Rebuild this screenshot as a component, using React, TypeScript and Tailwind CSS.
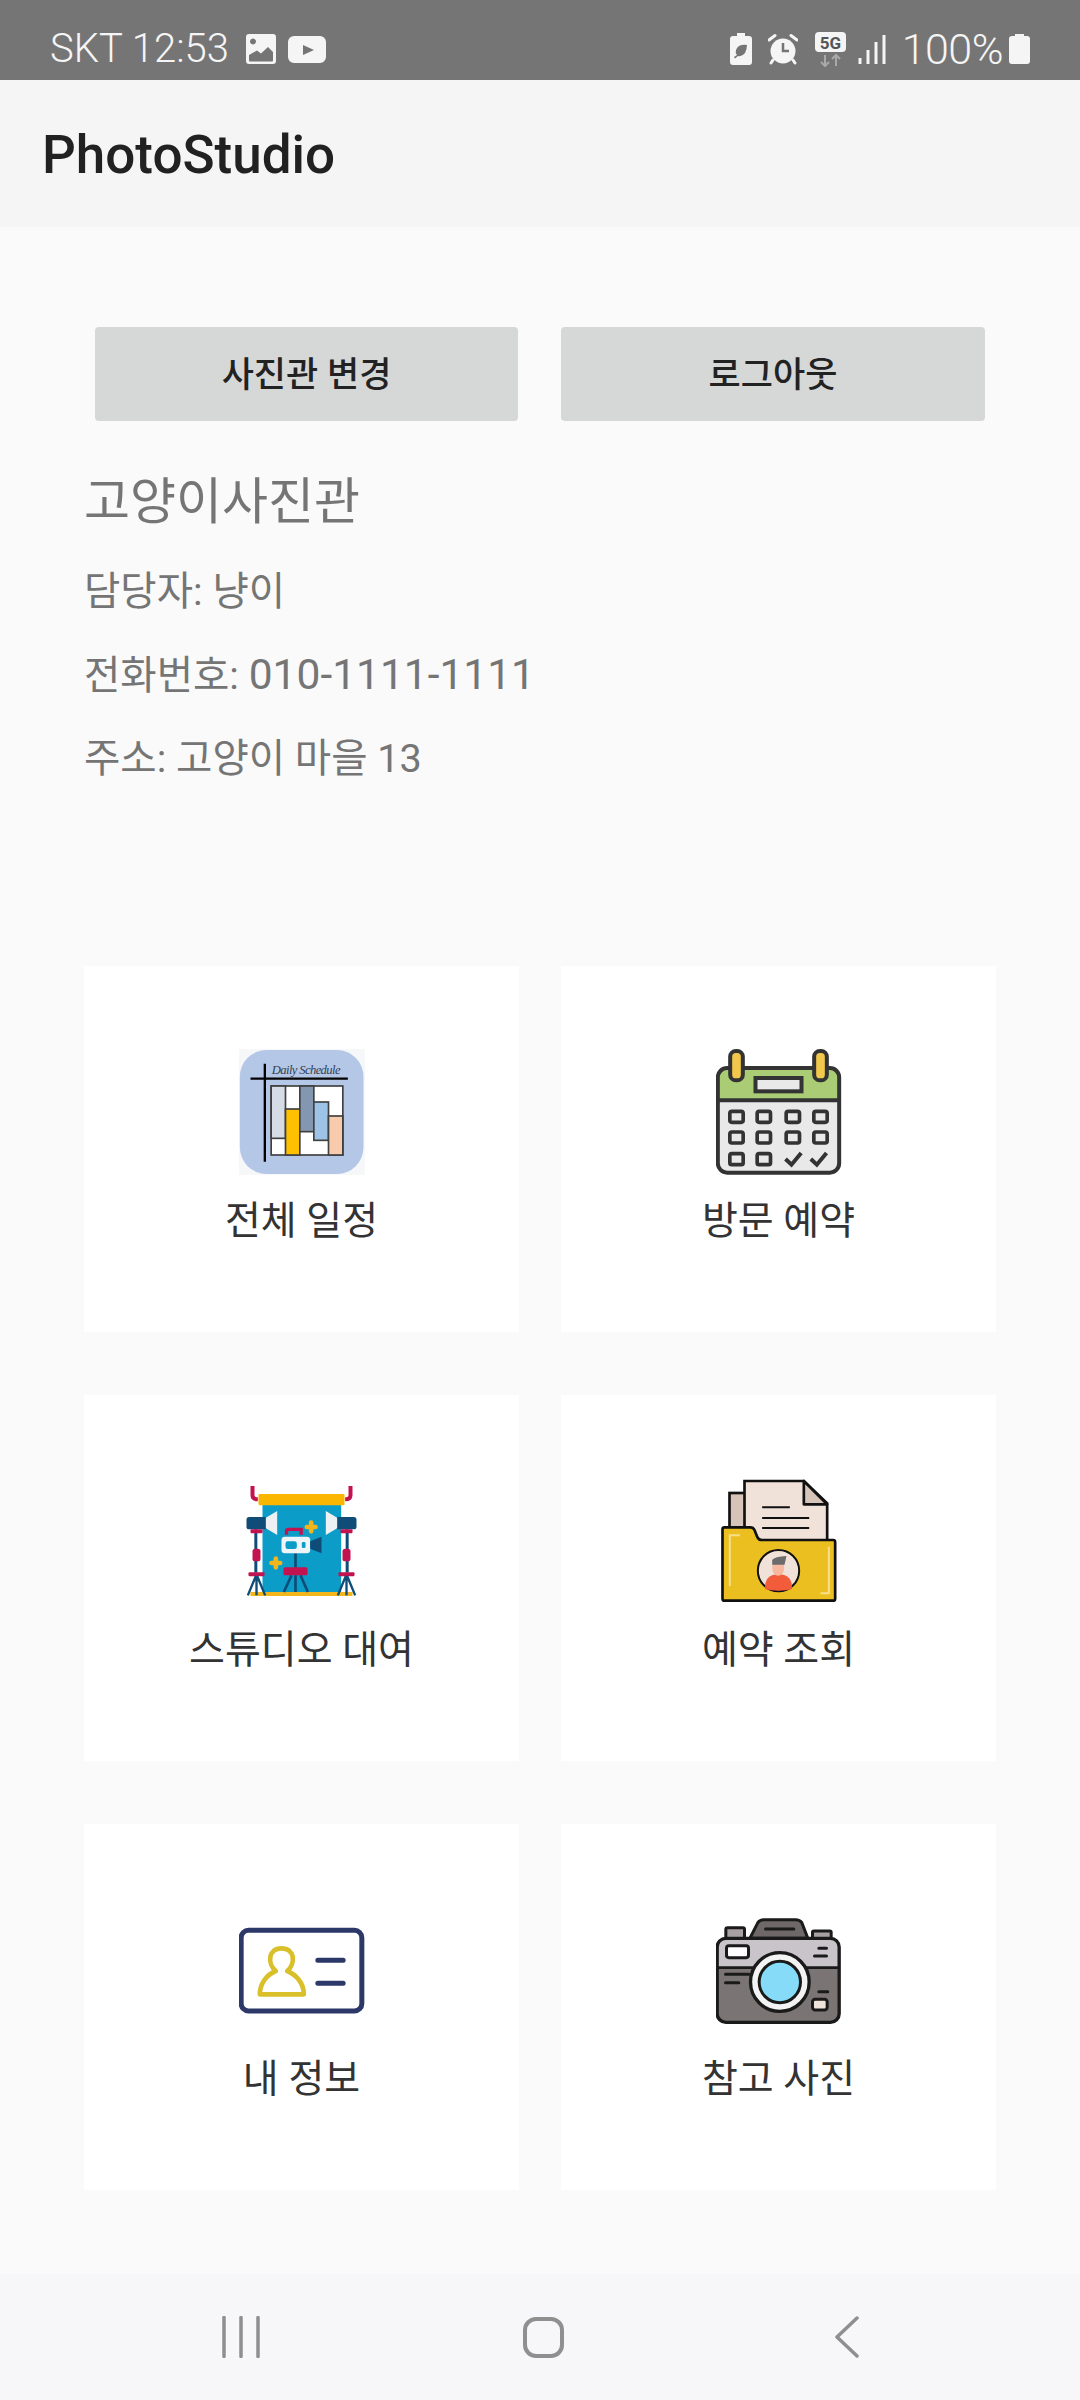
const Ink = "#333333";

function ScheduleIcon() {
  return (
    <svg viewBox="115.5 84 378 378" className="h-[126px] w-[126px]">
      <rect x="115.5" y="84" width="378" height="378" fill="#f6f7f9" />
      <rect x="118" y="87" width="371" height="372" rx="80" fill="#b4c7e7" />
      <text x="214" y="160" fontSize="38" fontStyle="italic" fontFamily="'Liberation Serif', serif" fill="#333f50" textLength="206">Daily Schedule</text>
      <rect x="212" y="195" width="215" height="207" fill="#ffffff" stroke="#404040" strokeWidth="5" />
      <rect x="212" y="195" width="43" height="157" fill="#d6dce5" stroke="#404040" strokeWidth="5" />
      <rect x="255" y="264" width="43" height="138" fill="#ffc000" stroke="#404040" strokeWidth="5" />
      <rect x="298" y="195" width="42" height="137" fill="#8497b0" stroke="#404040" strokeWidth="5" />
      <rect x="340" y="243" width="44" height="115" fill="#9dc3e6" stroke="#404040" strokeWidth="5" />
      <rect x="384" y="285" width="43" height="117" fill="#f8cbad" stroke="#404040" strokeWidth="5" />
      <path d="M193 128V422M150 173H442" stroke="#000000" strokeWidth="7" fill="none" />
    </svg>
  );
}

function CalendarIcon() {
  const xs = [118, 200, 287, 370];
  return (
    <svg viewBox="76.5 54 378 378" className="h-[126px] w-[126px]">
      <rect x="82" y="111" width="364" height="314" rx="28" fill="#e9e9e9" />
      <path d="M82 208V139a28 28 0 0 1 28-28H418a28 28 0 0 1 28 28V208Z" fill="#a9cc74" />
      <rect x="82" y="111" width="364" height="314" rx="28" fill="none" stroke={Ink} strokeWidth="12" />
      <path d="M82 208H446" stroke={Ink} strokeWidth="12" />
      <rect x="119" y="60" width="38" height="88" rx="17" fill="#f1c84b" stroke={Ink} strokeWidth="12" />
      <rect x="371" y="60" width="38" height="88" rx="17" fill="#f1c84b" stroke={Ink} strokeWidth="12" />
      <rect x="195" y="141" width="138" height="40" fill="#e9e9e9" stroke={Ink} strokeWidth="12" />
      {[241, 303].map((y) =>
        xs.map((x) => (
          <rect key={`${x}-${y}`} x={x} y={y} width="40" height="33" rx="6" fill="#e9e9e9" stroke={Ink} strokeWidth="11" />
        ))
      )}
      <rect x="118" y="368" width="40" height="33" rx="6" fill="#e9e9e9" stroke={Ink} strokeWidth="11" />
      <rect x="200" y="368" width="40" height="33" rx="6" fill="#e9e9e9" stroke={Ink} strokeWidth="11" />
      <path d="M285 384L303 401L332 366M361 384L379 401L408 366" fill="none" stroke={Ink} strokeWidth="12" />
    </svg>
  );
}

function StudioIcon() {
  const navy = "#0f4c78";
  const red = "#c2124f";
  const side = (
    <>
      <path d="M96 60V88Q96 100 112 100" fill="none" stroke={red} strokeWidth="12" />
      <path d="M106 190V320" stroke={navy} strokeWidth="9" />
      <rect x="78" y="153" width="62" height="37" rx="8" fill={navy} />
      <path d="M136 155L170 135V207L136 187Z" fill="#eef1f4" />
      <rect x="90" y="190" width="36" height="12" rx="3" fill={red} />
      <rect x="96" y="248" width="24" height="38" rx="8" fill={red} />
      <rect x="84" y="319" width="48" height="12" rx="3" fill={red} />
      <path d="M106 330L82 388M108 330V388M110 330L134 388" stroke={navy} strokeWidth="7" fill="none" />
    </>
  );
  return (
    <svg viewBox="55.5 36 378 378" className="h-[126px] w-[126px]">
      <rect x="126" y="112" width="236" height="268" fill="#0b9cc7" />
      <rect x="90" y="378" width="306" height="12" fill="#f2b51c" />
      <rect x="114" y="84" width="258" height="34" rx="4" fill="#fbb600" />
      {side}
      <g transform="matrix(-1 0 0 1 486 0)">{side}</g>
      <path d="M198 206V196Q198 190 204 190H242V206" fill="none" stroke={red} strokeWidth="10" />
      <path d="M225 262V305M213 328L190 378M225 328V378M240 328L262 378" stroke={navy} strokeWidth="8" fill="none" />
      <rect x="183" y="212" width="86" height="50" rx="10" fill="#eef4f7" />
      <rect x="195" y="226" width="34" height="23" rx="7" fill="#0b9cc7" />
      <rect x="244" y="228" width="11" height="18" rx="4" fill="#0b9cc7" />
      <path d="M269 226L303 212V262L269 248Z" fill={navy} />
      <rect x="189" y="304" width="72" height="24" rx="5" fill={red} />
      <path d="M272 170V196M259 183H285M166 278V304M153 291H179" stroke="#f2b51c" strokeWidth="14" strokeLinecap="round" />
    </svg>
  );
}

function FolderIcon() {
  return (
    <svg viewBox="46.5 36 378 378" className="h-[126px] w-[126px]">
      <rect x="87" y="81" width="60" height="120" fill="#d7c4b8" stroke="#111111" strokeWidth="8" />
      <path d="M132 45H310L380 112V240H132Z" fill="#f0e1d9" stroke="#111111" strokeWidth="8" />
      <path d="M310 45V115H380Z" fill="#d7c4b8" stroke="#111111" strokeWidth="8" strokeLinejoin="round" />
      <path d="M185 124H268M185 156H326M185 186H326" stroke="#111111" strokeWidth="6" />
      <path d="M66 190Q66 184 72 184H150Q158 184 162 192L170 212Q174 222 184 222H398Q404 222 404 228V398Q404 404 398 404H72Q66 404 66 398Z" fill="#ecbf20" stroke="#111111" strokeWidth="8" />
      <path d="M88 360V208H118M360 382H385V242" fill="none" stroke="#f7e08a" strokeWidth="6" />
      <circle cx="234" cy="314" r="62" fill="#f0e1d9" stroke="#111111" strokeWidth="6" />
      <path d="M194 370Q190 326 234 324Q278 326 274 370Q234 378 194 370Z" fill="#f25c3b" />
      <ellipse cx="233" cy="306" rx="18" ry="23" fill="#f6b89e" />
      <path d="M215 296V282Q222 272 258 270L252 296Z" fill="#6b6b6b" />
    </svg>
  );
}

function IdCardIcon() {
  return (
    <svg viewBox="55.5 18 378 378" className="h-[126px] w-[126px]">
      <rect x="62" y="88" width="362" height="242" rx="22" fill="#ffffff" stroke="#2c3968" strokeWidth="15" />
      <path d="M118 280H250C250 245 225 220 200 210C225 190 225 142 183 142C141 142 141 190 166 210C141 220 118 245 118 280Z" fill="none" stroke="#d9c02a" strokeWidth="14" strokeLinejoin="round" />
      <path d="M292 178H368M292 247H368" stroke="#2c3968" strokeWidth="15" strokeLinecap="round" />
    </svg>
  );
}

function CameraIcon() {
  const line = "#1a1a1a";
  return (
    <svg viewBox="46.5 18 378 378" className="h-[126px] w-[126px]">
      <path d="M148 112L172 65Q178 56 190 56H285Q298 56 304 65L322 112Z" fill="#6e6868" stroke={line} strokeWidth="9" />
      <path d="M195 84H280" stroke={line} strokeWidth="9" strokeLinecap="round" />
      <rect x="76" y="80" width="56" height="34" rx="5" fill="#a7a1a4" stroke={line} strokeWidth="9" />
      <rect x="336" y="90" width="56" height="24" rx="4" fill="#a7a1a4" stroke={line} strokeWidth="9" />
      <rect x="50" y="112" width="366" height="252" rx="26" fill="#7a7474" />
      <path d="M50 200V138a26 26 0 0 1 26-26H390a26 26 0 0 1 26 26V200Z" fill="#c9c3ca" />
      <rect x="50" y="112" width="366" height="252" rx="26" fill="none" stroke={line} strokeWidth="10" />
      <path d="M50 200H416" stroke={line} strokeWidth="8" />
      <rect x="78" y="134" width="66" height="36" rx="7" fill="#ffffff" stroke={line} strokeWidth="9" />
      <path d="M355 142H378M342 165H378M75 220H145M75 245H115M355 272H382" stroke={line} strokeWidth="9" strokeLinecap="round" />
      <circle cx="238" cy="243" r="88" fill="#f3f3f3" stroke={line} strokeWidth="10" />
      <circle cx="238" cy="243" r="62" fill="#86dcf8" stroke={line} strokeWidth="9" />
      <rect x="336" y="295" width="44" height="32" rx="8" fill="#efe3da" stroke={line} strokeWidth="9" />
    </svg>
  );
}

function StatusLeftIcons() {
  return (
    <div className="flex items-center gap-[12px]">
      <svg viewBox="0 0 30 30" className="h-[30px] w-[30px]">
        <path fill="#f5f5f5" fillRule="evenodd" d="M3 0H27a3 3 0 0 1 3 3V27a3 3 0 0 1-3 3H3a3 3 0 0 1-3-3V3a3 3 0 0 1 3-3ZM10 7.500a3 3 0 1 0 0 .01ZM3 21V26.500Q3 27.500 4 27.500H26Q27 27.500 27 26.500V18L22 13L15 19.500L11 16.500Z" />
      </svg>
      <svg viewBox="0 0 38 27" className="h-[27px] w-[38px]">
        <path fill="#f5f5f5" fillRule="evenodd" d="M6 0H32a6 6 0 0 1 6 6V21a6 6 0 0 1-6 6H6a6 6 0 0 1-6-6V6a6 6 0 0 1 6-6ZM15 9V19L26 14Z" />
      </svg>
    </div>
  );
}

function StatusRightIcons() {
  return (
    <div className="flex items-center">
      <svg viewBox="0 0 22 32" className="mr-[16px] h-[32px] w-[22px]">
        <path fill="#f5f5f5" fillRule="evenodd" d="M7 0H15V3H19a3 3 0 0 1 3 3V29a3 3 0 0 1-3 3H3a3 3 0 0 1-3-3V6a3 3 0 0 1 3-3H7ZM17 12Q8 11 6 17Q5 20 7 22L4 24L5 25.500L8 23Q12 24 15 20Q17 16 17 12Z" />
      </svg>
      <svg viewBox="0 0 30 32" className="mr-[17px] h-[32px] w-[30px]">
        <circle cx="15" cy="18" r="12.500" fill="#f5f5f5" />
        <path d="M15 10V18H21" fill="none" stroke="#757575" strokeWidth="2.500" />
        <path d="M1 7L7 2.500M29 7L23 2.500M5 27L3 30M25 27L27 30" stroke="#f5f5f5" strokeWidth="3" strokeLinecap="round" />
      </svg>
      <svg viewBox="0 0 31 35" className="mr-[12px] h-[35px] w-[31px]">
        <rect x="0" y="0" width="31" height="20" rx="4" fill="#f5f5f5" />
        <text x="15.500" y="17" textAnchor="middle" fontSize="17" fontWeight="700" fontFamily="Roboto, sans-serif" fill="#555555">5G</text>
        <path d="M10 23V34M6 30L10 34L14 30M21 34V23M17 27L21 23L25 27" fill="none" stroke="#a9a9a9" strokeWidth="2" />
      </svg>
      <svg viewBox="0 0 28 29" className="mr-[16px] h-[29px] w-[28px]">
        <path d="M2 23V29M10 15V29M18 7V29M26 0V29" stroke="#f5f5f5" strokeWidth="3" />
      </svg>
      <span className="mr-[6px] text-[43px] leading-none font-light tracking-[-0.5px] text-[#f5f5f5]">100%</span>
      <svg viewBox="0 0 21 30" className="h-[30px] w-[21px]">
        <path fill="#f5f5f5" d="M6 0H15V2H18a3 3 0 0 1 3 3V27a3 3 0 0 1-3 3H3a3 3 0 0 1-3-3V5a3 3 0 0 1 3-3H6Z" />
      </svg>
    </div>
  );
}

type Tile = {
  label: string;
  icon: React.ReactNode;
};

const tiles: Tile[] = [
  { label: "전체 일정", icon: <ScheduleIcon /> },
  { label: "방문 예약", icon: <CalendarIcon /> },
  { label: "스튜디오 대여", icon: <StudioIcon /> },
  { label: "예약 조회", icon: <FolderIcon /> },
  { label: "내 정보", icon: <IdCardIcon /> },
  { label: "참고 사진", icon: <CameraIcon /> },
];

export default function App() {
  return (
    <div className="flex h-[2400px] w-[1080px] flex-col overflow-hidden bg-[#fafafa] font-[Roboto,'Noto_Sans_CJK_KR',sans-serif]">
      <div className="flex h-[80px] items-center justify-between bg-[#757575] pt-[18px] pr-[50px] pl-[50px]">
        <div className="flex items-center gap-[17px]">
          <span className="text-[40px] leading-none font-light text-[#f5f5f5]">SKT 12:53</span>
          <StatusLeftIcons />
        </div>
        <StatusRightIcons />
      </div>

      <header className="flex h-[147px] items-center bg-[#f5f5f5] pt-[5px] pl-[42px]">
        <h1 className="text-[53px] font-medium text-[#212121]">PhotoStudio</h1>
      </header>

      <main className="flex-1 px-[84px]">
        <div className="mt-[100px] ml-[11px] grid w-[890px] grid-cols-[423px_424px] gap-x-[43px]">
          <button className="h-[94px] rounded-[4px] bg-[#d6d7d7] pt-[4px] text-[35px] font-medium text-[#222222]">사진관 변경</button>
          <button className="h-[94px] rounded-[4px] bg-[#d6d7d7] pt-[4px] text-[35px] font-medium text-[#222222]">로그아웃</button>
        </div>

        <div className="mt-[48px] text-[#757575]">
          <h2 className="text-[50px] leading-[66px]">고양이사진관</h2>
          <p className="mt-[31px] text-[39.5px] leading-[52px]">담당자: 냥이</p>
          <p className="mt-[31px] text-[39.5px] leading-[52px]">
            전화번호: <span className="text-[42.5px]">010-1111-1111</span>
          </p>
          <p className="mt-[31px] text-[39.5px] leading-[52px]">주소: 고양이 마을 13</p>
        </div>

        <div className="mt-[181px] grid grid-cols-[435px_435px] gap-x-[42px] gap-y-[63px]">
          {tiles.map((tile) => (
            <div key={tile.label} className="flex h-[366px] flex-col items-center bg-white pt-[83px]">
              {tile.icon}
              <span className="mt-[18px] text-[39px] leading-[56px] text-[#333333]">{tile.label}</span>
            </div>
          ))}
        </div>
      </main>

      <nav className="grid h-[126px] grid-cols-[303px_303px_303px] items-center justify-items-center bg-[#f7f7f9] pl-[89px]">
        <svg viewBox="0 0 38 42" className="h-[42px] w-[38px]">
          <path d="M2 1.500V40.500M19 1.500V40.500M36 1.500V40.500" stroke="#8f8f8f" strokeWidth="3.500" strokeLinecap="round" />
        </svg>
        <div className="h-[41px] w-[41px] rounded-[13px] border-[4px] border-[#8f8f8f]" />
        <svg viewBox="0 0 24 42" className="h-[42px] w-[24px]">
          <path d="M22 2L2 21L22 40" fill="none" stroke="#8f8f8f" strokeWidth="3.500" strokeLinecap="round" strokeLinejoin="round" />
        </svg>
      </nav>
    </div>
  );
}
